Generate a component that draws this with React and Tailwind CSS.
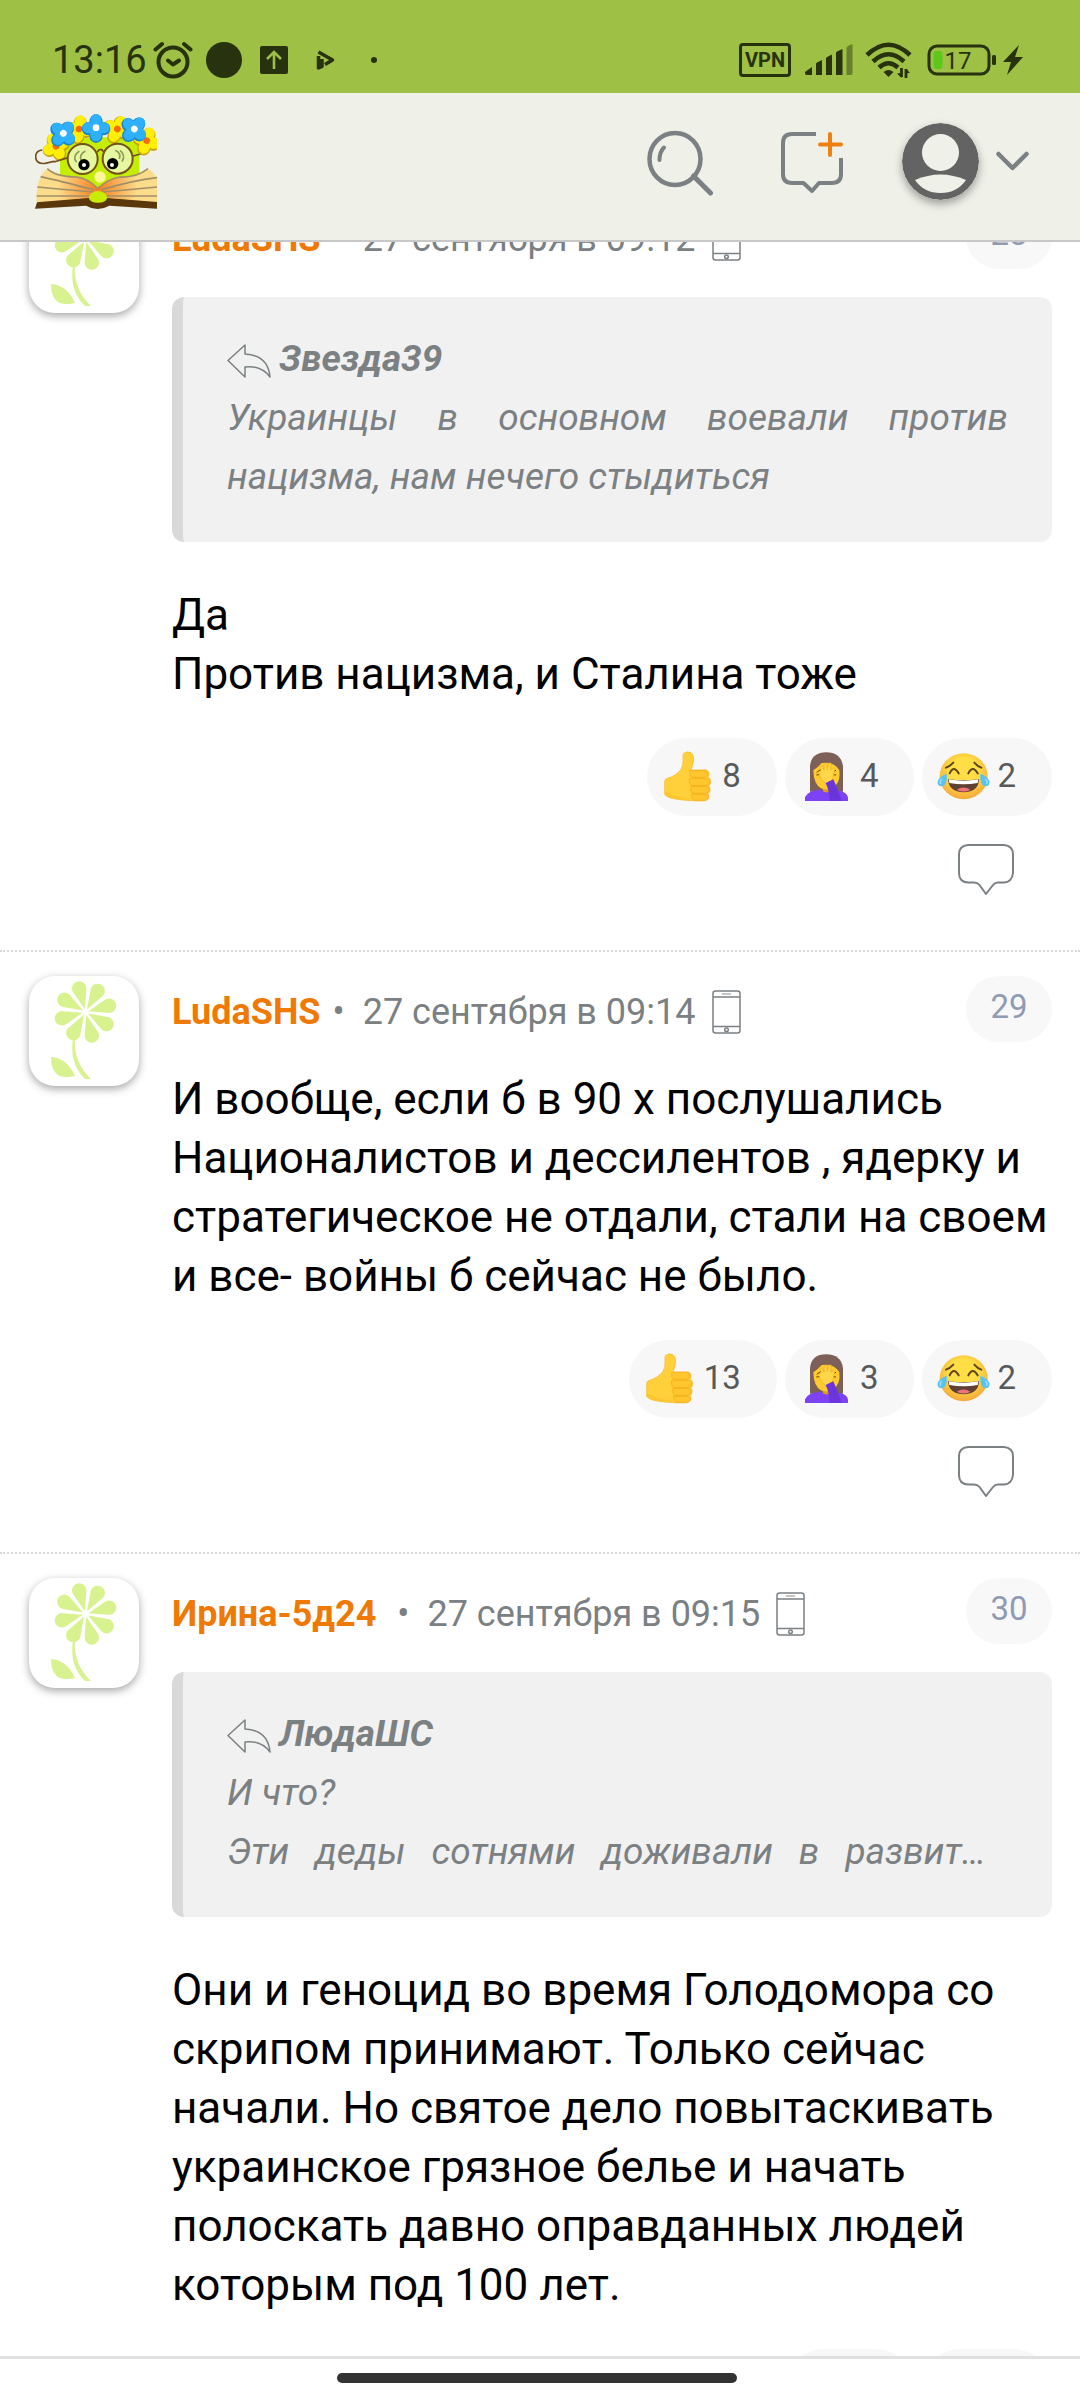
const comments = [
    {
        id: 28,
        author: 'LudaSHS',
        date: '27 сентября в 09:12',
        quote: { author: 'Звезда39', lines: ['Украинцы в основном воевали против нацизма, нам нечего стыдиться'] },
        lines: ['Да', 'Против нацизма, и Сталина тоже'],
        reactions: [{ type: 'like', count: 8 }, { type: 'facepalm', count: 4 }, { type: 'joy', count: 2 }],
    },
    {
        id: 29,
        author: 'LudaSHS',
        date: '27 сентября в 09:14',
        lines: ['И вообще, если б в 90 х послушались Националистов и дессилентов , ядерку и стратегическое не отдали, стали на своем и все- войны б сейчас не было.'],
        reactions: [{ type: 'like', count: 13 }, { type: 'facepalm', count: 3 }, { type: 'joy', count: 2 }],
    },
    {
        id: 30,
        author: 'Ирина-5д24\u00a0',
        date: '27 сентября в 09:15',
        quote: { author: 'ЛюдаШС', lines: ['И что?', 'Эти деды сотнями доживали в развит…'], clipped: true },
        lines: ['Они и геноцид во время Голодомора со скрипом принимают. Только сейчас начали. Но святое дело повытаскивать украинское грязное белье и начать полоскать давно оправданных людей которым под 100 лет.'],
        reactions: [{ type: 'like', count: 1 }, { type: 'joy', count: 1 }],
    },
]

function StatusBar() {
    return (
        <div className="flex h-[93px] shrink-0 items-center justify-between bg-[#9dc045] pt-[27px] pr-[57px] pl-[52px] text-[#28320f]">
            <div className="flex items-center">
                <span className="text-[38px]">13:16</span>
                <svg className="ml-1.5 h-10 w-10" viewBox="0 0 40 40" fill="none" stroke="currentColor" strokeWidth="4" strokeLinecap="round">
                    <circle cx="20" cy="22" r="14.5" />
                    <path d="M2.5 9.5 L9 4 M37.5 9.5 L31 4" />
                    <path d="M15 20.5 L20 24.5 L26 20.5" strokeLinejoin="round" />
                </svg>
                <span className="ml-[13px] h-9 w-9 rounded-full bg-[#28320f]" />
                <svg className="ml-[18px] h-7 w-7" viewBox="0 0 28 28">
                    <rect width="28" height="28" rx="2" fill="currentColor" />
                    <path d="M14 23 V7 M7 13 L14 6 L21 13" fill="none" stroke="#9dc045" strokeWidth="2.6" />
                </svg>
                <svg className="ml-7 h-5 w-[19px]" viewBox="0 0 19 20" fill="none" stroke="currentColor" strokeWidth="3.5" strokeLinejoin="round">
                    <path d="M2.5 6 V18 L6 16.500 V9" />
                    <path d="M2.5 2 L16.500 10 L9 14.500" />
                </svg>
                <span className="ml-9 h-1.5 w-1.5 rounded-full bg-[#28320f]" />
            </div>
            <div className="flex items-center">
                <span className="flex h-[34px] w-[52px] items-center justify-center rounded-[4px] border-[3px] border-[#28320f] text-xl font-bold">VPN</span>
                <svg className="ml-3.5 h-8 w-12" viewBox="0 0 48 32" fill="currentColor">
                    <path d="M0 28 L7 23 V31 H2 Q0 31 0 29Z M11 20 Q11 19 12 18.5 L17 16 V31 H11Z M21 14.500 Q21 13.500 22 13 L27 10.500 V31 H21Z M31 9 Q31 8 32 7.500 L37.500 5 V31 H31Z" />
                    <path d="M41.500 4 Q41.500 3 43 2 L47.500 0 V29 Q47.500 31 46 31 H41.500Z" opacity="0.45" />
                </svg>
                <svg className="ml-3 h-9 w-12" viewBox="0 0 48 36" fill="none" stroke="currentColor" strokeWidth="4.500">
                    <path d="M2 13 Q23.500 -7.500 45 13" />
                    <path d="M8 19.500 Q23.500 5 39 19.500" />
                    <path d="M14 25.500 Q23.500 17 33 25.500" />
                    <path d="M18.500 30 Q23.500 26 28.500 30 L23.500 35Z" fill="currentColor" stroke="none" />
                    <path d="M36.500 26 V35 M41 27 V36" strokeWidth="2.800" />
                    <path d="M32 31.500 L36.500 36 V31Z M45 31 L41 26.500 V31Z" fill="currentColor" stroke="none" />
                </svg>
                <svg className="ml-3.5 h-8 w-[70px]" viewBox="0 0 70 32" fill="none" stroke="currentColor">
                    <rect x="2" y="2" width="60" height="28" rx="8" strokeWidth="3" />
                    <rect x="6.500" y="7" width="9" height="18" rx="3" fill="#5cc81b" stroke="none" />
                    <rect x="65" y="11" width="4" height="10" rx="1.500" fill="currentColor" stroke="none" />
                    <text x="31" y="25" fontSize="24" textAnchor="middle" fill="currentColor" stroke="none">17</text>
                </svg>
                <svg className="ml-1.5 h-[30px] w-5" viewBox="0 0 20 30" fill="currentColor">
                    <path d="M16 0 L0 17 H8 L4 30 L20 12 H12Z" />
                </svg>
            </div>
        </div>
    )
}

function WreathFlower({ x, y, fill, shade, core, turn = 0 }) {
    const petals = [0, 90, 180, 270]
    return (
        <g transform={`translate(${x} ${y}) rotate(${turn})`}>
            {petals.map((a) => <ellipse key={a} cx="0" cy="-21" rx="20" ry="22" fill={shade} transform={`translate(0 3) rotate(${a})`} />)}
            {petals.map((a) => <ellipse key={a} cx="0" cy="-21" rx="17" ry="20" fill={fill} transform={`rotate(${a})`} />)}
            <circle r="10" fill={core} />
        </g>
    )
}

const blue = { fill: '#2fb0fb', shade: '#1b87cf', core: '#fff' }
const yellow = { fill: '#ffee08', shade: '#c9a40b', core: '#fb6a07' }

function Logo() {
    return (
        <svg className="h-24 w-[122px]" viewBox="45 38 366 288" role="img" aria-label="Логотип">
            <defs>
                <radialGradient id="pages" gradientUnits="userSpaceOnUse" cx="233" cy="265" r="150">
                    <stop offset="0" stopColor="#f57c1f" />
                    <stop offset="0.800" stopColor="#fbdc8a" />
                </radialGradient>
            </defs>
            <path d="M120 130 Q240 90 358 130 V250 L233 285 L120 250Z" fill="#c4ee05" />
            <path d="M45 325 L52 303 L200 292 H262 L411 303 V325 L268 316 Q233 336 198 316Z" fill="#5b380c" />
            <path d="M82 205 Q108 228 170 230 Q205 235 233 264 Q268 234 300 230 Q350 232 384 205 Q400 212 411 236 V305 L262 293 H205 L50 306 Q46 232 82 205Z" fill="url(#pages)" />
            <g fill="none" stroke="#a18f68" strokeWidth="5">
                <path d="M82 205 Q108 230 170 230 Q205 235 233 264 Q268 234 300 230 Q350 232 384 205" />
                <path d="M62 229 Q120 242 220 268 M52 260 Q130 268 220 275 M50 287 H212" />
                <path d="M411 232 Q340 240 246 268 M411 260 Q330 268 246 275 M411 287 H256" />
            </g>
            <path d="M206 292 Q212 272 234 272 Q258 274 262 292 Q258 307 234 307 Q210 307 206 292Z" fill="#c9ec05" />
            <circle cx="240" cy="230" r="17" fill="#fff59a" />
            <path d="M65 149 Q46 152 47 172 Q50 192 75 189 L102 183 M340 167 L374 157" fill="none" stroke="#74501c" strokeWidth="5" strokeLinecap="round" />
            <WreathFlower x={108} y={138} turn={-25} {...yellow} />
            <WreathFlower x={380} y={121} turn={20} {...yellow} />
            <WreathFlower x={177} y={86} turn={10} {...yellow} />
            <WreathFlower x={292} y={86} turn={25} {...yellow} />
            <WreathFlower x={130} y={99} turn={40} {...blue} />
            <WreathFlower x={343} y={86} turn={42} {...blue} />
            <WreathFlower x={228} y={82} turn={0} {...blue} />
            <g fill="#e6f7a0" stroke="#74501c" strokeWidth="6">
                <circle cx="188" cy="176" r="45" />
                <circle cx="293" cy="175" r="45" />
            </g>
            <path d="M231 156 Q242 138 252 156 M102 185 L144 172" fill="none" stroke="#74501c" strokeWidth="5" />
            <path d="M178 152 Q155 168 170 186 M196 152 Q175 165 184 182 M300 150 Q318 164 306 184 M286 150 Q305 160 298 176" fill="none" stroke="#8b9c55" strokeWidth="5" />
            <circle cx="192" cy="193" r="17" />
            <circle cx="278" cy="190" r="17" />
            <circle cx="192" cy="194" r="6" fill="#fff" />
            <circle cx="276" cy="194" r="6" fill="#fff" />
        </svg>
    )
}

function Header() {
    return (
        <header className="relative z-10 flex shrink-0 items-center justify-between border-b-2 border-[#c8c8c8] bg-[#eff1e8] pt-[20px] pr-[51px] pb-[31px] pl-[35px]">
            <a href="#home"><Logo /></a>
            <div className="flex items-center text-[#7b8083]">
                <button type="button" aria-label="Поиск">
                    <svg className="h-[70px] w-[66px]" viewBox="0 0 66 70" fill="none" stroke="currentColor" strokeWidth="4.500" strokeLinecap="round">
                        <ellipse cx="28" cy="33" rx="25.500" ry="26" />
                        <path d="M46.500 50 L63.500 67" strokeWidth="5" />
                        <path d="M17 21.500 Q12.500 26 12.500 34" strokeWidth="4" />
                    </svg>
                </button>
                <button type="button" aria-label="Новая тема" className="ml-[68px]">
                    <svg className="h-[66px] w-[62px]" viewBox="0 0 62 66" fill="none" stroke="currentColor" strokeWidth="4" strokeLinecap="round">
                        <path d="M35 6 H11 Q2 6 2 15 V46 Q2 55 11 55 H22.500 L31 63 L38 55 H51 Q60 55 60 46 V30" strokeLinecap="butt" strokeLinejoin="round" />
                        <path d="M49 6 V27 M39 16.500 H60" stroke="#ef7f0e" />
                    </svg>
                </button>
                <button type="button" aria-label="Профиль" className="ml-[59px] flex items-center gap-[17px]">
                    <svg className="h-[77px] w-[77px] rounded-full shadow-[0_4px_8px_rgba(0,0,0,0.35)]" viewBox="0 0 77 77">
                        <circle cx="38.500" cy="38.500" r="38.500" fill="#636363" />
                        <circle cx="38.500" cy="29.500" r="18.500" fill="#eff1e8" />
                        <path d="M13 57 Q38.500 46 64 57 Q55 70 38.500 70 Q22 70 13 57Z" fill="#eff1e8" />
                    </svg>
                    <svg className="h-5 w-[33px]" viewBox="0 0 33 20" fill="none" stroke="currentColor" strokeWidth="4.500" strokeLinecap="round" strokeLinejoin="round">
                        <path d="M2.500 3 L16.500 17 L30.500 3" />
                    </svg>
                </button>
            </div>
        </header>
    )
}

function FlowerAvatar() {
    return (
        <svg className="h-[110px] w-[110px] shrink-0 rounded-[26px] bg-white shadow-[0_3px_8px_rgba(0,0,0,0.35)]" viewBox="0 0 110 110" fill="#d8f28f">
            {[-15, 30, 75, 120, 165, 210, 255, 300].map((a) => (
                <path key={a} d="M0 -3 L-6.800 -22 A7.200 7.200 0 1 1 6.800 -22Z" transform={`translate(56.500 36) rotate(${a})`} />
            ))}
            <path d="M44 62 Q40 88 56 103 H62 Q44 86 46 62Z" />
            <path d="M22 81 Q38 82 46 100 Q22 106 22 81Z" />
        </svg>
    )
}

function PhoneIcon() {
    return (
        <svg className="h-11 w-[29px]" viewBox="0 0 29 44" fill="none" stroke="#7b8083" strokeWidth="1.500">
            <rect x="1" y="1" width="27" height="42" rx="2.500" />
            <path d="M1 7 H28 M1 36.500 H28" />
            <path d="M10 4 H19" stroke="#c4c6c8" strokeWidth="2" />
            <circle cx="14.500" cy="39.800" r="1.800" />
        </svg>
    )
}

function LikeIcon() {
    return (
        <svg className="h-[55px] w-[55px]" viewBox="120 86 165 165">
            <path d="M188 99 Q198 91 210 97 Q219 103 218 118 Q216 135 210 149 H245 Q262 146 264 160 Q264 166 262 170 Q270 176 269 186 Q268 193 264 197 Q269 204 267 212 Q265 218 261 220 Q267 228 262 235 Q257 242 245 242 Q195 242 165 236 Q140 233 131 222 V182 Q132 176 139 174 Q165 167 180 147 Q188 134 186 112 Q185 102 188 99Z" fill="#ffd03a" stroke="#f6b62b" strokeWidth="2" />
            <path d="M206 150 H249 Q262 150 262 160 Q261 170 250 171 H212 Q204 166 206 150Z M206 174 H255 Q268 176 267 186 Q265 196 252 196 H212 Q202 188 206 174Z M210 198 H252 Q266 198 265 208 Q264 219 250 219 H214 Q206 210 210 198Z M212 222 H250 Q263 222 262 231 Q260 241 245 240 H220 Q210 236 212 222Z" fill="#ffc62e" stroke="#f3a91d" strokeWidth="2" />
            <path d="M131 212 Q165 232 215 236 Q180 242 150 234 Q134 230 131 222Z" fill="#fdc62f" />
        </svg>
    )
}

function FacepalmIcon() {
    return (
        <svg className="h-[55px] w-[55px]" viewBox="534 86 165 165">
            <path d="M567 214 V136 Q572 96 616 96 Q661 97 666 138 V214Z" fill="#7d6058" />
            <path d="M606 190 H630 V222 H606Z" fill="#dc9a16" />
            <path d="M577 150 Q592 140 602 128 Q640 122 655 150 Q660 190 632 204 Q616 211 600 204 Q578 192 577 150Z" fill="#ffca2c" />
            <path d="M552 242 V231 Q560 210 600 208 Q616 224 634 210 Q676 210 681 232 V242Z" fill="#7c42f4" />
            <path d="M587 156 L600 147 M586 164 L600 162 M634 154 L645 150 M636 163 L645 164" stroke="#70420f" strokeWidth="3" />
            <path d="M594 160 Q592 152 600 152 L598 140 Q601 134 606 139 L609 149 V132 Q613 127 617 132 L619 147 L624 128 Q630 126 631 132 L629 149 L637 144 Q643 145 640 152 L635 178 L614 190 Q598 180 594 160Z" fill="#ffd54a" stroke="#eeaa19" strokeWidth="2" />
            <path d="M614 188 L637 177 Q650 205 662 242 H626 Q625 210 614 188Z" fill="#6b35dd" />
        </svg>
    )
}

function JoyIcon() {
    return (
        <svg className="h-[55px] w-[55px]" viewBox="948 86 165 165">
            <defs>
                <radialGradient id="face" cx="0.500" cy="0.400" r="0.600">
                    <stop offset="0.500" stopColor="#ffdf45" />
                    <stop offset="1" stopColor="#f4a83a" />
                </radialGradient>
            </defs>
            <ellipse cx="1031" cy="168" rx="72" ry="69" fill="url(#face)" />
            <path d="M978 142 Q990 138 1000 127 M1084 142 Q1072 138 1063 127 M989 159 Q1001 133 1016 159 M1045 159 Q1058 133 1073 159" fill="none" stroke="#5f4522" strokeWidth="6" strokeLinecap="round" />
            <path d="M984 176 Q1031 184 1077 176 Q1076 215 1031 216 Q986 215 984 176Z" fill="#5f4033" />
            <path d="M986 177 Q1031 185 1075 177 L1073 188 Q1031 196 988 188Z" fill="#fff" />
            <path d="M1010 208 Q1030 195 1051 208 Q1032 219 1010 208Z" fill="#ef7379" />
            <path d="M980 160 Q983 192 967 198 Q950 198 953 182 Q958 168 980 160Z M1081 160 Q1079 192 1094 198 Q1112 198 1108 182 Q1103 168 1081 160Z" fill="#58c3f2" />
            <path d="M966 176 Q958 182 962 191 M1096 176 Q1104 182 1100 191" fill="none" stroke="#a5e0fb" strokeWidth="4" />
        </svg>
    )
}

const reactionIcons = { like: LikeIcon, facepalm: FacepalmIcon, joy: JoyIcon }

function Reaction({ type, count }) {
    const Icon = reactionIcons[type]
    return (
        <button type="button" aria-label={type} className="flex h-[78px] items-center gap-1.5 rounded-full bg-[#f7f7f7] pr-9 pb-0.5 pl-3.5 text-[33px] text-[#58595a]">
            <Icon />
            <span>{count}</span>
        </button>
    )
}

function Quote({ author, lines, clipped }) {
    return (
        <blockquote className="mb-11 rounded-[12px] border-l-[11px] border-[#d9d9d9] bg-[#f1f1f1] px-11 pt-8 pb-9 text-justify text-[37px] leading-[59px] text-[#7b8083] italic">
            <div className="flex items-center gap-2">
                <svg className="mt-1 h-[34px] w-11" viewBox="0 0 44 34" fill="none" stroke="currentColor" strokeWidth="1.500" strokeLinejoin="round">
                    <path d="M18 1 L1 16.500 L18 33 V23 Q34 21 43 33 Q41 11 18 10Z" />
                </svg>
                <cite className="font-bold">{author}</cite>
            </div>
            {lines.map((line, i) => (
                <p key={line} className={clipped && i === lines.length - 1 ? 'pr-[22px] [text-align-last:justify]' : ''}>{line}</p>
            ))}
        </blockquote>
    )
}

function Comment({ id, author, date, quote, lines, reactions }) {
    return (
        <article className="flex gap-[33px] border-b-2 border-dotted border-[#d9d9d9] pt-6 pr-7 pb-[55px] pl-[29px]">
            <FlowerAvatar />
            <div className="min-w-0 flex-1">
                <div className="flex h-[94px] items-start justify-between">
                    <div className="flex items-center pt-3.5 text-4xl leading-[44px] text-[#7b8083]">
                        <a href="#author" className="font-bold text-[#ee7a05]">{author}</a>
                        <span className="mr-[18px] ml-3">•</span>
                        <time>{date}</time>
                        <span className="ml-4"><PhoneIcon /></span>
                    </div>
                    <a href="#comment" className="flex h-[66px] w-[86px] items-center justify-center rounded-full bg-[#f8f8f8] pb-1 text-[33px] text-[#8f9bb3]">{id}</a>
                </div>
                {quote && <Quote {...quote} />}
                <div className="text-[44px] leading-[59px] text-black">
                    {lines.map((line) => <p key={line}>{line}</p>)}
                </div>
                <div className="mt-[34px] flex justify-end gap-2">
                    {reactions.map((r) => <Reaction key={r.type} {...r} />)}
                </div>
                <div className="mt-7 flex justify-end pr-[38px]">
                    <button type="button" aria-label="Ответить">
                        <svg className="h-[51px] w-14" viewBox="0 0 56 51" fill="none" stroke="#7b8083" strokeWidth="2" strokeLinejoin="round">
                            <path d="M10 1 H46 Q55 2 55 10 V29 Q54 38 46 38.500 H40 Q37 38.500 35 41 L28 50 L21.500 41 Q19.500 38.500 16 38.500 H10 Q1 38 1 29 V10 Q1 2 10 1Z" />
                        </svg>
                    </button>
                </div>
            </div>
        </article>
    )
}

export default function App() {
    return (
        <div className="flex h-screen flex-col bg-white font-[Roboto,sans-serif]">
            <StatusBar />
            <Header />
            <main className="min-h-0 flex-1 overflow-hidden">
                {/* the list is scrolled a little, so the first comment starts behind the header */}
                <div className="-mt-[63px]">
                    {comments.map((c) => <Comment key={c.id} {...c} />)}
                </div>
            </main>
            <footer className="flex shrink-0 justify-center border-t-[3px] border-[#e0e0e0] bg-white pt-3.5 pr-1.5 pb-[17px]">
                <div className="h-2.5 w-[400px] rounded-full bg-[#333]" />
            </footer>
        </div>
    )
}
